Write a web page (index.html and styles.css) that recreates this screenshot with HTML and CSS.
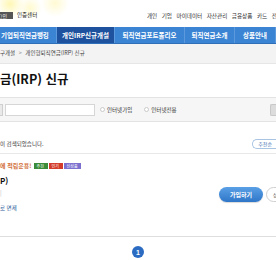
FILE: index.html
```html
<!DOCTYPE html>
<html lang="ko">
<head>
<meta charset="utf-8">
<title>개인형퇴직연금(IRP) 신규</title>
<link rel="stylesheet" href="styles.css">
</head>
<body>
<header class="top">
  <div class="top-left">
    <span class="login-box">그인</span>
    <span class="cert">인증센터</span>
  </div>
  <ul class="util">
    <li>개인</li><li>기업</li><li>마이데이터</li><li>자산관리</li><li>금융상품</li><li>카드</li><li>전체</li>
  </ul>
</header>
<nav class="gnb">
  <a class="gnb-item w1">기업퇴직연금뱅킹</a>
  <a class="gnb-item w2 active">개인IRP신규개설</a>
  <a class="gnb-item w3">퇴직연금포트폴리오</a>
  <a class="gnb-item w4">퇴직연금소개</a>
  <a class="gnb-item w5">상품안내</a>
</nav>
<div class="location">구개설 <span class="arrow">&gt;</span> 개인형퇴직연금(IRP) 신규</div>
<main class="content">
  <h1 class="title">금(IRP) 신규</h1>
  <div class="search">
    <span class="sel-edge"></span>
    <span class="input"></span>
    <label class="radio"><span class="dot"></span>인터넷가입</label>
    <label class="radio"><span class="dot"></span>인터넷전용</label>
    <span class="btn-edge"></span>
  </div>
  <div class="result">
    <span>이 검색되었습니다.</span>
    <span class="sort">추천순</span>
  </div>
  <div class="list">
    <div class="item">
      <div class="info">
        <p class="catch">에 적립운용! <span class="badge g">추천</span><span class="badge r">인기</span><span class="badge p">신상품</span></p>
        <p class="name">P)</p>
        <p class="bar">|</p>
        <p class="link">로 면제</p>
      </div>
      <div class="actions">
        <a class="btn-join">가입하기</a>
        <a class="btn-more">상품</a>
      </div>
    </div>
  </div>
  <div class="paging"><span class="page">1</span></div>
</main>
</body>
</html>
```
FILE: styles.css
```css
* { box-sizing: border-box; margin: 0; padding: 0; }
html, body { width: 276px; height: 260px; overflow: hidden; }
body {
  background: #fff;
  font-family: "Noto Sans CJK KR", "Noto Sans", sans-serif;
  color: #333;
}
.top {
  height: 27px;
  display: flex;
  justify-content: space-between;
  align-items: flex-start;
  padding-top: 12px;
  background:
    radial-gradient(circle at 10px 4px, rgba(255,240,120,0.55), rgba(255,255,255,0) 14px),
    radial-gradient(circle at 30px 8px, rgba(255,245,150,0.45), rgba(255,255,255,0) 12px),
    radial-gradient(circle at 55px 3px, rgba(255,240,130,0.35), rgba(255,255,255,0) 14px),
    #fff;
}
.top-left { display: flex; align-items: center; gap: 4px; }
.login-box {
  display: block;
  width: 13px; height: 7px;
  background: #555;
  color: #eee;
  font-size: 5px; line-height: 7px;
  text-indent: -2px;
  overflow: hidden;
  white-space: nowrap;
}
.cert { font-size: 5.5px; line-height: 7px; color: #222; }
.util {
  list-style: none;
  display: flex;
  gap: 4.5px;
  font-size: 5.6px;
  line-height: 8px;
  color: #333;
  margin-right: -6px;
  white-space: nowrap;
}
.gnb {
  height: 17px;
  display: flex;
  background: #3b84d4;
  border-bottom: 1px solid #2f6fb8;
}
.gnb-item {
  display: flex; align-items: center; justify-content: center;
  color: #fff;
  font-weight: 700;
  font-size: 6.5px;
  white-space: nowrap;
  border-right: 1px solid #5b99dc;
}
.gnb-item.active { background: #1e529e; }
.w1 { width: 57px; justify-content: flex-start; padding-left: 1px; }
.w2 { width: 58px; }
.w3 { width: 70px; }
.w4 { width: 50px; }
.w5 { width: 41px; }
.location {
  height: 20px;
  background: #f3f3f3;
  border-bottom: 1px solid #e6e6e6;
  font-size: 5.5px;
  line-height: 19px;
  color: #444;
  white-space: nowrap;
}
.location .arrow { color: #999; margin: 0 2px; }
.content { padding-top: 8px; }
.title {
  font-size: 12.5px;
  line-height: 14px;
  font-weight: 700;
  color: #111;
  white-space: nowrap;
}
.search {
  margin-top: 11px;
  height: 25px;
  background: #f6f6f6;
  border-top: 1px solid #e3e3e3;
  border-bottom: 1px solid #e3e3e3;
  display: flex;
  align-items: center;
}
.sel-edge { width: 3px; height: 12px; background: #e9e9e9; border: 1px solid #cfcfcf; border-left: 0; }
.input { width: 90px; height: 12px; background: #fff; border: 1px solid #d6d6d6; margin-left: 2px; }
.radio {
  display: flex; align-items: center;
  font-size: 5.5px;
  color: #333;
  white-space: nowrap;
}
.radio:first-of-type { margin-left: 5px; }
.radio + .radio { margin-left: 12px; }
.dot { width: 5px; height: 5px; border-radius: 50%; border: 1px solid #c9c9c9; background: #fff; margin-right: 2px; }
.btn-edge { margin-left: auto; width: 6px; height: 12px; background: #dcdcdc; border-radius: 2px 0 0 2px; border: 1px solid #c8c8c8; border-right: 0; }
.result {
  margin-top: 15px;
  height: 13px;
  display: flex;
  justify-content: space-between;
  align-items: center;
  font-size: 5.5px;
  color: #333;
}
.sort {
  height: 10px;
  padding: 0 4px 0 5px;
  border: 1px solid #a9c3e2;
  border-right: 0;
  border-radius: 5px 0 0 5px;
  font-size: 5px;
  line-height: 8px;
  color: #3a6fb0;
  background: #fff;
  white-space: nowrap;
}
.list {
  margin-top: 3px;
  border-top: 1px solid #e8e8e8;
  border-bottom: 1px solid #dedede;
}
.item { height: 82px; display: flex; justify-content: space-between; }
.info { padding-top: 7px; }
.catch {
  font-size: 6px;
  line-height: 10px;
  color: #d2703a;
  font-weight: 700;
  white-space: nowrap;
  display: flex; align-items: center;
}
.badge {
  display: inline-block;
  height: 6px;
  padding: 0 3px;
  font-size: 4px;
  line-height: 6px;
  color: #fff;
  font-weight: 400;
  margin-left: 1px;
}
.badge.g { background: #3a8c3a; width: 14px; margin-left: 2px; }
.badge.r { background: #d33b2b; width: 14px; }
.badge.p { background: #7c70cf; width: 17px; }
.name { font-size: 8px; line-height: 13px; font-weight: 700; color: #111; margin-top: 3px; }
.bar { font-size: 6px; line-height: 8px; color: #bbb; margin-top: 2px; }
.link { font-size: 5.5px; line-height: 8px; color: #2f5d9c; margin-top: 7px; }
.actions { display: flex; align-items: flex-start; gap: 3px; padding-top: 33px; margin-right: -14px; }
.btn-join {
  width: 44px; height: 15px;
  border-radius: 8px;
  background: linear-gradient(#5aa0e6, #2f76c8);
  color: #fff;
  font-size: 6px;
  font-weight: 700;
  display: flex; align-items: center; justify-content: center;
  box-shadow: 0 1px 1px rgba(0,0,0,0.15);
}
.btn-more {
  width: 24px; height: 15px;
  border-radius: 8px;
  border: 1px solid #d0d0d0;
  background: #fff;
  color: #555;
  font-size: 5px;
  display: flex; align-items: center; padding-left: 6px;
}
.paging { display: flex; justify-content: center; padding-top: 9px; }
.page {
  width: 12px; height: 12px;
  border-radius: 50%;
  background: #2b6bc2;
  color: #fff;
  font-size: 7px;
  font-weight: 700;
  font-family: "Liberation Sans", sans-serif;
  display: flex; align-items: center; justify-content: center;
}
```
